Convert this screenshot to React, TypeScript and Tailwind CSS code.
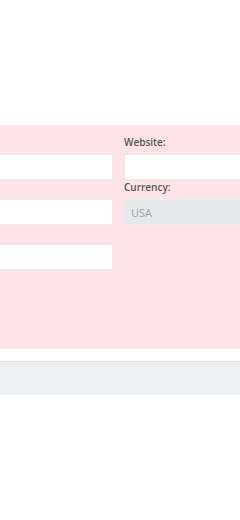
import React from "react";

const baseInput =
  "h-[26px] w-full rounded-[2px] border border-[#ececec] px-[6px] text-[11px] shadow-[0_0_2px_rgba(0,0,0,0.06)] outline-none";

const Field = ({
  label,
  value,
  disabled,
}: {
  label?: string;
  value?: string;
  disabled?: boolean;
}) => (
  <div className="flex flex-col">
    <label className="mb-[5px] h-[13px] text-[10px] leading-[13px] font-semibold text-[#555]">
      {label}
    </label>
    <input
      type="text"
      defaultValue={value}
      disabled={disabled}
      className={
        disabled
          ? baseInput + " bg-[#e6e9ec] text-[#a0a0a0]"
          : baseInput + " bg-white text-[#555]"
      }
    />
  </div>
);

const App = () => {
  return (
    <div
      className="h-[520px] w-[240px] overflow-hidden bg-white"
      style={{ fontFamily: '"Open Sans", "Liberation Sans", sans-serif' }}
    >
      <div className="h-[125px]" />
      <div className="h-[224px] bg-[#ffe3e7] pt-[11px]">
        <div className="ml-[-117px] grid w-[471px] grid-cols-2 gap-x-[11px] gap-y-[1px]">
          <Field />
          <Field label="Website:" />
          <Field />
          <Field label="Currency:" value="USA" disabled />
          <Field />
        </div>
      </div>
      <div className="h-[12px] bg-white" />
      <div className="h-[34px] border-t border-[#dedede] bg-[#eef1f4]" />
    </div>
  );
};

export default App;
